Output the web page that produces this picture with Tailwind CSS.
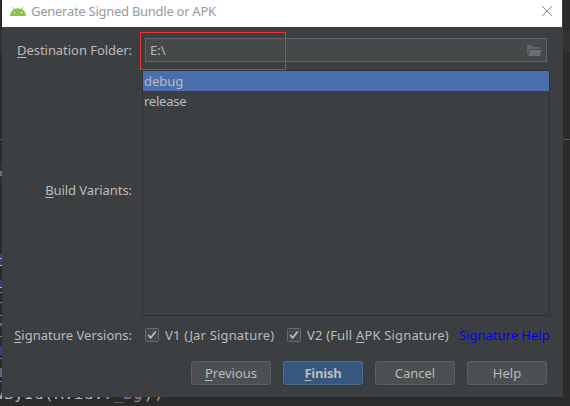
<!DOCTYPE html>
<html lang="en">
<head>
<meta charset="utf-8">
<title>Generate Signed Bundle or APK</title>
<script src="https://cdn.jsdelivr.net/npm/@tailwindcss/browser@4"></script>
</head>
<body class="relative h-[406px] w-[570px] overflow-hidden bg-[#2b2b2b] font-['Noto_Sans',sans-serif] text-[13px] leading-[20px] text-[#bbbbbb]">
<!-- editor behind the dialog -->
<div class="absolute inset-x-0 top-[30px] h-[22px] bg-[#323232]"></div>
<div class="absolute inset-x-0 top-[139px] h-px bg-[#555555]"></div>
<div class="absolute left-0 top-[164px] h-[18px] w-[2px] bg-[#323232]"></div>
<div class="absolute left-0 top-[171px] h-[5px] w-[2px] bg-[#567b82]"></div>
<div class="absolute left-0 top-[254px] h-[12px] w-[2px] bg-[#34408a]"></div>
<div class="absolute left-0 top-[258px] h-px w-[2px] bg-[#a9b7c6]"></div>
<div class="absolute left-0 top-[265px] h-px w-[2px] bg-[#a9b7c6]"></div>
<div class="absolute left-0 top-[280px] h-[8px] w-[2px] bg-[#34408a]"></div>
<div class="absolute left-0 top-[287px] h-px w-[2px] bg-[#a9b7c6]"></div>
<div class="absolute left-0 top-[346px] h-[9px] w-[2px] bg-[#34408a]"></div>
<div class="absolute left-0 top-[368px] h-[9px] w-[2px] bg-[#53698a]"></div>
<div class="absolute left-0 top-[292px] h-px w-[2px] bg-[#777777]"></div>
<div class="absolute left-0 top-[302px] h-px w-[2px] bg-[#777777]"></div>
<div class="absolute left-0 top-[315px] h-px w-[2px] bg-[#777777]"></div>
<div class="absolute left-0 top-[323px] h-[3px] w-[2px] bg-[#4b718a]"></div>
<div class="absolute left-0 top-[336px] h-px w-[2px] bg-[#777777]"></div>
<div class="absolute left-0 top-[358px] h-px w-[2px] bg-[#777777]"></div>
<div class="absolute left-0 top-[381px] h-px w-[2px] bg-[#777777]"></div>
<pre class="absolute left-[-6px] top-[383px] font-['DejaVu_Sans_Mono',monospace] text-[16px] leading-[22px] tracking-[0.35px] text-[#a9b7c6]">wById(R.id.<i class="text-[#9876aa]">v_bg</i>)<span class="text-[#cc7832]">;</span></pre>

<main class="absolute left-[2px] top-0 flex h-[397px] w-[561px] flex-col bg-[#3c3f41]">
  <header class="flex h-[27px] w-[560px] shrink-0 items-center bg-white pl-[8px] pr-[10px] text-[#999999]">
    <svg class="mt-[-5px] h-[9px] w-[16px]" viewBox="0 0 16 9"><path d="M0 9C.3 5.8 1.7 3.7 3.7 2.5L2.4.4 3 0l1.4 2.1a9 9 0 0 1 7.2 0L13 0l.6.4-1.3 2.1C14.3 3.7 15.7 5.8 16 9Z" fill="#8bc34a"/><circle cx="4.4" cy="5.7" r=".7" fill="#fff"/><circle cx="11.6" cy="5.7" r=".7" fill="#fff"/></svg>
    <span class="mt-[-6px] ml-[5px] whitespace-nowrap tracking-[-0.27px]">Generate Signed Bundle or APK</span>
    <svg class="ml-auto mt-[-5px] size-[10px]" viewBox="0 0 10 10"><path d="M0 0 10 10M10 0 0 10" stroke="#888" fill="none"/></svg>
  </header>
  <section class="grid grid-cols-[130px_407px] gap-x-[10px]">
    <label class="flex h-[43px] items-center justify-end pt-[3px] tracking-[-0.05px] whitespace-nowrap"><span><u class="underline-offset-2">D</u>estination Folder:</span></label>
    <div class="mt-[11px] ml-[3px] flex h-[24px] w-[402px] items-center justify-between border border-[#646464] bg-[#45494a] pl-[4px] pr-[4px]">
      <span>E:\</span>
      <svg class="h-[11px] w-[15px]" viewBox="0 0 15 11"><path d="M0 8V0h5l1 2h7v2H3L0 10Z" fill="#5f676b"/><path d="M3.5 5H15l-2.5 6H1Z" fill="#657077"/></svg>
    </div>
    <label class="flex h-[246px] items-center justify-end pb-[7px] tracking-[-0.07px] whitespace-nowrap"><span><u class="underline-offset-2">B</u>uild Variants:</span></label>
    <div class="h-[246px] w-[408px] border border-[#323232]">
      <div class="h-[20px] bg-[#4b6eaf] pl-px tracking-[-0.05px]">debug</div>
      <div class="h-[20px] pl-px tracking-[-0.25px]">release</div>
    </div>
  </section>
  <section class="flex h-[39px] items-center whitespace-nowrap">
    <div class="w-[130px] pb-[2px] text-right"><u class="underline-offset-2">S</u>ignature Versions:</div>
    <svg class="mt-[-2px] ml-[13px] size-[14px]" viewBox="0 0 14 14"><rect x=".5" y=".5" width="13" height="13" rx="1" fill="#43494a" stroke="#6b6b6b"/><path d="m3.2 6.8 2.5 3 5-6.3" fill="none" stroke="#bbb" stroke-width="1.8"/></svg>
    <div class="ml-[6px] w-[122px] pb-[2px] tracking-[0.17px]">V1 (<u class="underline-offset-2">J</u>ar Signature)</div>
    <svg class="mt-[-2px] size-[14px]" viewBox="0 0 14 14"><rect x=".5" y=".5" width="13" height="13" rx="1" fill="#43494a" stroke="#6b6b6b"/><path d="m3.2 6.8 2.5 3 5-6.3" fill="none" stroke="#bbb" stroke-width="1.8"/></svg>
    <div class="ml-[6px] w-[152px] pb-[2px] tracking-[0.17px]">V2 (Full <u class="underline-offset-2">A</u>PK Signature)</div>
    <a class="pb-[2px] text-[#0000ff]">Signature Help</a>
  </section>
  <footer class="flex gap-[12px] pl-[189px] pt-[6px] text-center leading-[22px]">
    <button class="h-[24px] w-[80px] rounded-[3px] border border-[#5e6060] bg-[#4c5052] shadow-[0_1px_0_#353738]"><u class="underline-offset-2">P</u>revious</button>
    <button class="h-[24px] w-[80px] rounded-[3px] border border-[#4c708c] bg-[#365880] font-bold tracking-[-0.2px] shadow-[0_1px_0_#353738]"><u class="underline-offset-2">F</u>inish</button>
    <button class="h-[24px] w-[80px] rounded-[3px] border border-[#5e6060] bg-[#4c5052] shadow-[0_1px_0_#353738]">Cancel</button>
    <button class="h-[24px] w-[80px] rounded-[3px] border border-[#5e6060] bg-[#4c5052] shadow-[0_1px_0_#353738]">Help</button>
  </footer>
</main>
<!-- highlight around the destination path -->
<div class="absolute left-[140px] top-[32px] h-[38px] w-[146px] border border-[#f0302f]"></div>
</body>
</html>
